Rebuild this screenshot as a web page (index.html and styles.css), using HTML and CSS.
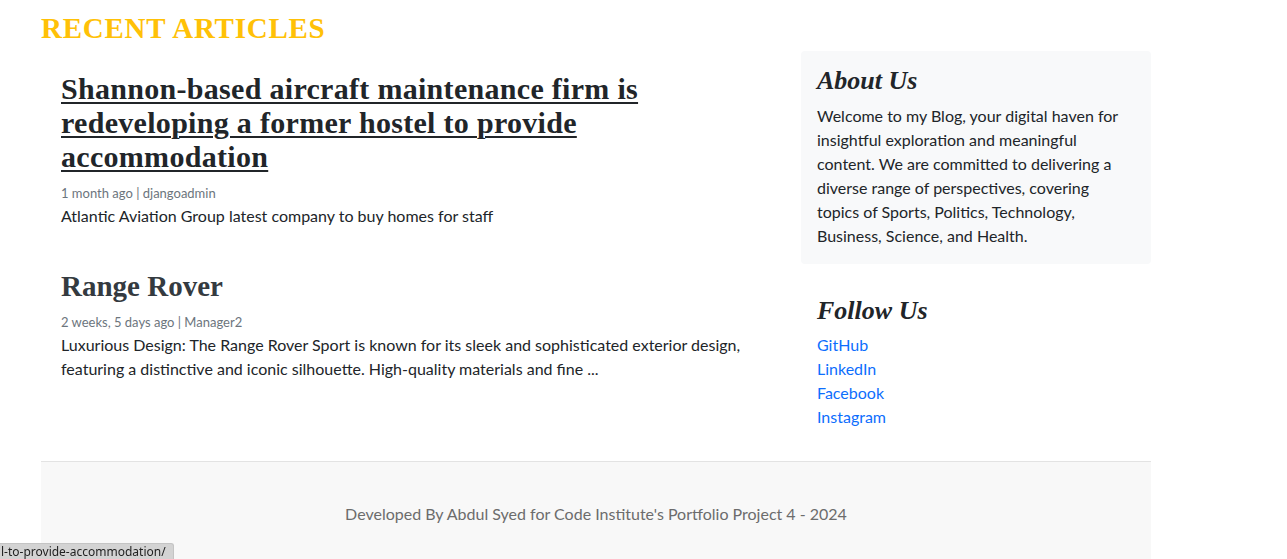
FILE: index.html
```html
<!DOCTYPE html>
<html lang="en">
<head>
<meta charset="utf-8">
<title>Blog</title>
<link rel="stylesheet" href="styles.css">
</head>
<body>
<main class="page">
  <h1 class="section-title">RECENT ARTICLES</h1>
  <div class="layout">
    <section class="articles">
      <article class="article">
        <h2 class="article-title"><a href="#">Shannon-based aircraft maintenance firm is redeveloping a former hostel to provide accommodation</a></h2>
        <p class="meta">1 month ago | djangoadmin</p>
        <p class="excerpt">Atlantic Aviation Group latest company to buy homes for staff</p>
      </article>
      <article class="article">
        <h2 class="article-title plain">Range Rover</h2>
        <p class="meta">2 weeks, 5 days ago | Manager2</p>
        <p class="excerpt">Luxurious Design: The Range Rover Sport is known for its sleek and sophisticated exterior design, featuring a distinctive and iconic silhouette. High-quality materials and fine ...</p>
      </article>
    </section>
    <aside class="sidebar">
      <div class="about">
        <h3 class="side-title">About Us</h3>
        <p class="about-text">Welcome to my Blog, your digital haven for insightful exploration and meaningful content. We are committed to delivering a diverse range of perspectives, covering topics of Sports, Politics, Technology, Business, Science, and Health.</p>
      </div>
      <div class="follow">
        <h3 class="side-title">Follow Us</h3>
        <ul class="links">
          <li><a href="#">GitHub</a></li>
          <li><a href="#">LinkedIn</a></li>
          <li><a href="#">Facebook</a></li>
          <li><a href="#">Instagram</a></li>
        </ul>
      </div>
    </aside>
  </div>
  <footer class="footer">
    <p>Developed By Abdul Syed for Code Institute's Portfolio Project 4 - 2024</p>
  </footer>
</main>
<div class="status">l-to-provide-accommodation/</div>
</body>
</html>
```
FILE: styles.css
```css
* { box-sizing: border-box; }
html, body { margin: 0; padding: 0; background: #fff; }
body {
  font-family: "Lato", "Noto Sans", sans-serif;
  font-size: 16px;
  line-height: 24px;
  color: #212529;
  overflow: hidden;
  height: 559px;
}
.page {
  width: 1110px;
  margin-left: 41px;
}
.section-title {
  margin: 0;
  padding-top: 10px;
  font-family: "Liberation Serif", serif;
  font-weight: 700;
  font-size: 29px;
  line-height: 36px;
  letter-spacing: 0.75px;
  color: #ffc107;
}
.layout {
  display: grid;
  grid-template-columns: 740px 350px;
  column-gap: 20px;
  margin-top: 5px;
}
.articles {
  padding: 21px 20px 0 20px;
}
.article + .article { margin-top: 41px; }
.article-title {
  margin: 0;
  font-family: "Liberation Serif", serif;
  font-weight: 700;
  font-size: 30px;
  line-height: 34px;
  letter-spacing: 0.3px;
  color: #212529;
}
.article-title a { color: #212529; text-decoration: underline; text-decoration-thickness: 2px; text-underline-offset: 3px; }
.article-title.plain { color: #343a40; font-size: 29px; letter-spacing: 0; }
.meta {
  margin: 9px 0 0;
  font-size: 13px;
  line-height: 21px;
  color: #6c757d;
}
.excerpt { margin: 0; }
.about {
  background: #f8f9fa;
  border-radius: 4px;
  padding: 13px 16px 16px;
}
.side-title {
  margin: 0;
  font-family: "Liberation Serif", serif;
  font-style: italic;
  font-weight: 700;
  font-size: 26px;
  line-height: 34px;
  color: #212529;
}
.about-text { margin: 6px 0 0; }
.follow {
  padding: 30px 16px 0;
}
.links {
  list-style: none;
  margin: 5px 0 0;
  padding: 0;
}
.links a { color: #0d6efd; text-decoration: none; }
.footer {
  margin-top: 32px;
  border-top: 1px solid #e3e3e3;
  background: #f8f8f8;
  padding: 40px 0 60px;
  text-align: center;
  color: #6c6c6c;
}
.footer p { margin: 0; }
.status {
  position: fixed;
  left: 0;
  bottom: 0;
  width: 174px;
  height: 16px;
  background: #d3d3d3;
  border: 1px solid #c4c4c4;
  border-left: none;
  border-bottom: none;
  border-top-right-radius: 3px;
  font-family: "Noto Sans", sans-serif;
  font-size: 12px;
  line-height: 15px;
  color: #222;
  padding-left: 1px;
  white-space: nowrap;
  overflow: hidden;
}
```
